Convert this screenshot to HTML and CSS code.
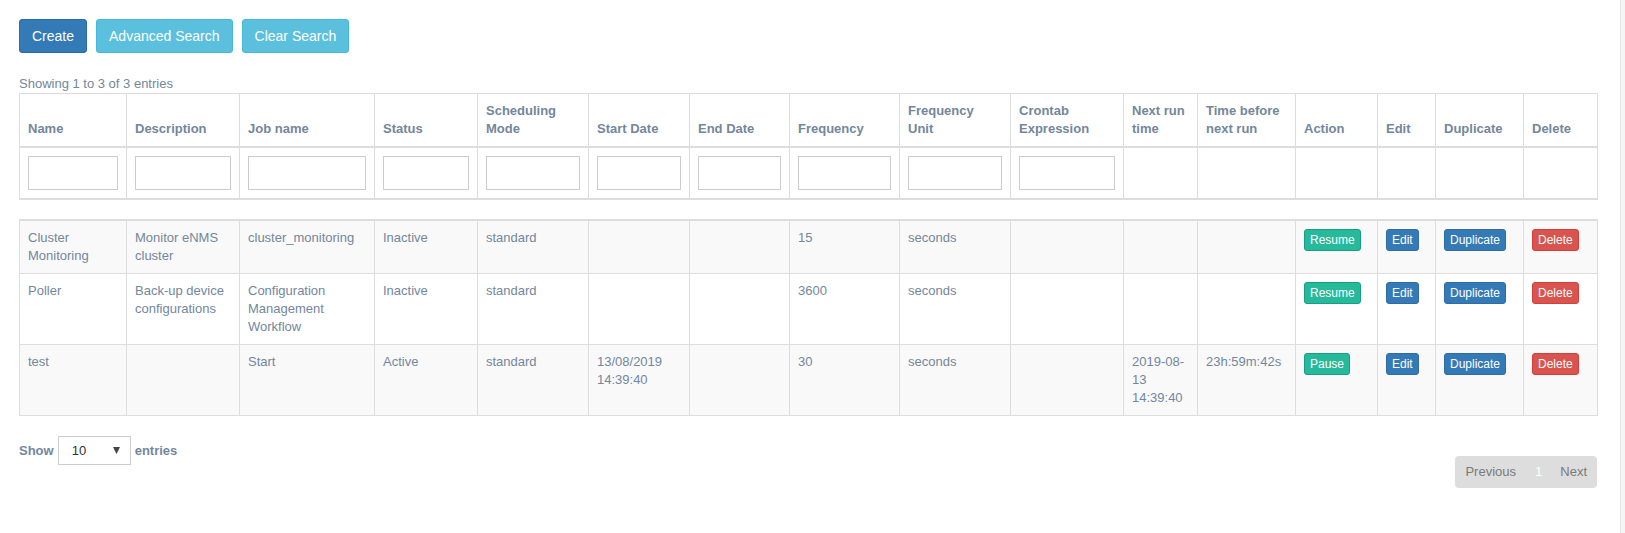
FILE: index.html
```html
<!DOCTYPE html>
<html lang="en">
<head>
<meta charset="utf-8">
<title>Scheduling</title>
<link rel="stylesheet" href="styles.css">
</head>
<body>
<div class="page">
  <main class="main">
    <div class="toolbar">
      <button class="btn btn-primary" type="button">Create</button>
      <button class="btn btn-info" type="button">Advanced Search</button>
      <button class="btn btn-info" type="button">Clear Search</button>
    </div>
    <div class="info">Showing 1 to 3 of 3 entries</div>
    <table class="grid grid-head">
      <colgroup>
        <col class="c1"><col class="c2"><col class="c3"><col class="c4"><col class="c5"><col class="c6"><col class="c7"><col class="c8"><col class="c9"><col class="c10"><col class="c11"><col class="c12"><col class="c13"><col class="c14"><col class="c15"><col class="c16">
      </colgroup>
      <thead>
        <tr class="titles">
          <th>Name</th>
          <th>Description</th>
          <th>Job name</th>
          <th>Status</th>
          <th>Scheduling<br>Mode</th>
          <th>Start Date</th>
          <th>End Date</th>
          <th>Frequency</th>
          <th>Frequency<br>Unit</th>
          <th>Crontab<br>Expression</th>
          <th>Next run<br>time</th>
          <th>Time before<br>next run</th>
          <th>Action</th>
          <th>Edit</th>
          <th>Duplicate</th>
          <th>Delete</th>
        </tr>
        <tr class="filters">
          <th><input class="filter" type="text"></th>
          <th><input class="filter" type="text"></th>
          <th><input class="filter" type="text"></th>
          <th><input class="filter" type="text"></th>
          <th><input class="filter" type="text"></th>
          <th><input class="filter" type="text"></th>
          <th><input class="filter" type="text"></th>
          <th><input class="filter" type="text"></th>
          <th><input class="filter" type="text"></th>
          <th><input class="filter" type="text"></th>
          <th></th>
          <th></th>
          <th></th>
          <th></th>
          <th></th>
          <th></th>
        </tr>
      </thead>
    </table>
    <table class="grid grid-body">
      <colgroup>
        <col class="c1"><col class="c2"><col class="c3"><col class="c4"><col class="c5"><col class="c6"><col class="c7"><col class="c8"><col class="c9"><col class="c10"><col class="c11"><col class="c12"><col class="c13"><col class="c14"><col class="c15"><col class="c16">
      </colgroup>
      <tbody>
        <tr>
          <td>Cluster Monitoring</td>
          <td>Monitor eNMS cluster</td>
          <td>cluster_monitoring</td>
          <td>Inactive</td>
          <td>standard</td>
          <td></td>
          <td></td>
          <td>15</td>
          <td>seconds</td>
          <td></td>
          <td></td>
          <td></td>
          <td><button class="btn-xs btn-success" type="button">Resume</button></td>
          <td><button class="btn-xs btn-blue" type="button">Edit</button></td>
          <td><button class="btn-xs btn-blue" type="button">Duplicate</button></td>
          <td><button class="btn-xs btn-danger" type="button">Delete</button></td>
        </tr>
        <tr>
          <td>Poller</td>
          <td>Back-up device configurations</td>
          <td>Configuration Management Workflow</td>
          <td>Inactive</td>
          <td>standard</td>
          <td></td>
          <td></td>
          <td>3600</td>
          <td>seconds</td>
          <td></td>
          <td></td>
          <td></td>
          <td><button class="btn-xs btn-success" type="button">Resume</button></td>
          <td><button class="btn-xs btn-blue" type="button">Edit</button></td>
          <td><button class="btn-xs btn-blue" type="button">Duplicate</button></td>
          <td><button class="btn-xs btn-danger" type="button">Delete</button></td>
        </tr>
        <tr>
          <td>test</td>
          <td></td>
          <td>Start</td>
          <td>Active</td>
          <td>standard</td>
          <td>13/08/2019 14:39:40</td>
          <td></td>
          <td>30</td>
          <td>seconds</td>
          <td></td>
          <td>2019-08-13 14:39:40</td>
          <td>23h:59m:42s</td>
          <td><button class="btn-xs btn-success" type="button">Pause</button></td>
          <td><button class="btn-xs btn-blue" type="button">Edit</button></td>
          <td><button class="btn-xs btn-blue" type="button">Duplicate</button></td>
          <td><button class="btn-xs btn-danger" type="button">Delete</button></td>
        </tr>
      </tbody>
    </table>
    <div class="footer-row">
      <div class="length">
        <span>Show</span>
        <span class="select"><span>10</span><svg class="caret" width="7" height="7" viewBox="0 0 7 7"><polygon points="0,0 7,0 3.5,7" fill="#444"/></svg></span>
        <span>entries</span>
      </div>
      <div class="pager">
        <span class="page-btn prev">Previous</span>
        <span class="page-btn current">1</span>
        <span class="page-btn next">Next</span>
      </div>
    </div>
  </main>
  <div class="edge"></div>
</div>
</body>
</html>
```

FILE: styles.css
```css
html, body {
  margin: 0;
  padding: 0;
}

body {
  font-family: "Liberation Sans", Arial, sans-serif;
  font-size: 13px;
  color: #73879c;
  background: #ffffff;
}

.page {
  display: flex;
  height: 100vh;
  overflow: hidden;
}

.main {
  width: 1620px;
  flex: none;
  box-sizing: border-box;
  padding: 19px 0 0 19px;
  background: #ffffff;
}

.edge {
  flex: 1;
  background: #f5f5f6;
  border-left: 1px solid #e4e4e4;
}

.toolbar {
  display: flex;
  gap: 9px;
}

.btn {
  font-family: inherit;
  font-size: 14px;
  line-height: 20px;
  padding: 6px 12px;
  border: 1px solid transparent;
  border-radius: 3px;
  color: #ffffff;
  cursor: pointer;
}

.btn-primary {
  background: #337ab7;
  border-color: #2e6da4;
}

.btn-info {
  background: #5bc0de;
  border-color: #46b8da;
}

.info {
  margin-top: 21px;
  line-height: 19px;
}

.grid {
  width: 1578px;
  table-layout: fixed;
  border-collapse: collapse;
  border: 1px solid #dddddd;
}

.grid th,
.grid td {
  padding: 8px;
  border: 1px solid #dddddd;
  line-height: 18px;
  text-align: left;
}

.c1 { width: 107px; }
.c2 { width: 113px; }
.c3 { width: 135px; }
.c4 { width: 103px; }
.c5 { width: 111px; }
.c6 { width: 101px; }
.c7 { width: 100px; }
.c8 { width: 110px; }
.c9 { width: 111px; }
.c10 { width: 113px; }
.c11 { width: 74px; }
.c12 { width: 98px; }
.c13 { width: 82px; }
.c14 { width: 58px; }
.c15 { width: 88px; }
.c16 { width: 74px; }

.grid-head {
  margin-bottom: 19px;
}

.grid-head th {
  vertical-align: bottom;
  font-weight: bold;
  border-bottom-width: 2px;
  background: #ffffff;
}

.filter {
  display: block;
  width: 100%;
  height: 34px;
  box-sizing: border-box;
  margin: 0;
  padding: 6px 12px;
  border: 1px solid #cccccc;
  border-radius: 0;
  background: #ffffff;
  font: inherit;
  color: #555555;
}

.grid-body {
  border-top: 2px solid #dddddd;
}

.grid-body td {
  vertical-align: top;
  background: #ffffff;
}

.grid-body tr:nth-child(odd) td {
  background: #f9f9f9;
}

.btn-xs {
  display: inline-block;
  vertical-align: top;
  margin: 0;
  font-family: inherit;
  font-size: 12px;
  line-height: 18px;
  padding: 1px 5px;
  border: 1px solid transparent;
  border-radius: 3px;
  color: #ffffff;
  cursor: pointer;
}

.btn-success {
  background: #26b99a;
  border-color: #169f85;
}

.btn-blue {
  background: #337ab7;
  border-color: #2e6da4;
}

.btn-danger {
  background: #d9534f;
  border-color: #d43f3a;
}

.footer-row {
  width: 1578px;
  display: flex;
  justify-content: space-between;
  align-items: flex-start;
}

.length {
  margin-top: 20px;
  display: flex;
  align-items: center;
  gap: 4px;
  font-weight: bold;
  line-height: 18px;
}

.select {
  width: 73px;
  height: 29px;
  box-sizing: border-box;
  border: 1px solid #cccccc;
  display: flex;
  align-items: center;
  justify-content: space-between;
  padding: 0 10px 0 13px;
  color: #333333;
  font-weight: normal;
  background: #ffffff;
}

.caret {
  display: block;
}

.pager {
  margin-top: 40px;
  display: flex;
  background: #dddddd;
  border-radius: 4px;
}

.page-btn {
  padding: 7px 9px;
  line-height: 18px;
  color: #7a7a7a;
}

.page-btn.prev {
  padding-left: 10px;
  padding-right: 10px;
}

.page-btn.next {
  padding-right: 10px;
}

.page-btn.current {
  color: #ffffff;
}
```
